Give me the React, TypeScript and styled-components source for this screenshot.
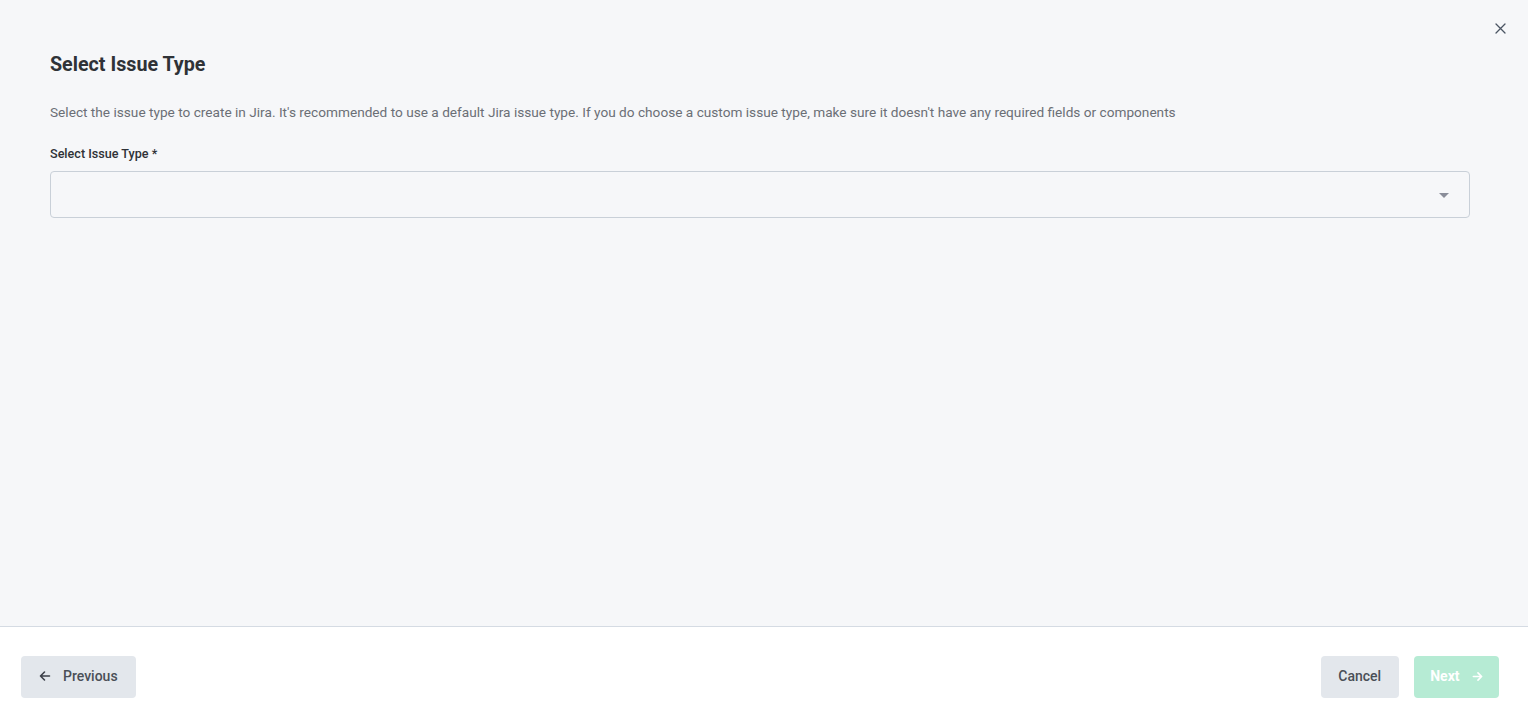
import React from "react";
import styled, { createGlobalStyle } from "styled-components";

const Global = createGlobalStyle`
  html, body { margin: 0; padding: 0; height: 100%; }
  body { font-family: Roboto, "Liberation Sans", Arial, sans-serif; background: #fff; }
  #root { height: 100%; }
  * { box-sizing: border-box; }
`;

const Page = styled.div`
  display: flex;
  flex-direction: column;
  height: 727px;
`;

const Body = styled.main`
  position: relative;
  flex: 1;
  background: #f6f7f9;
  border-bottom: 1px solid #d5dbe3;
  padding: 53px 58px 0 50px;
`;

const CloseButton = styled.button`
  position: absolute;
  top: 21px;
  right: 21px;
  width: 14px;
  height: 14px;
  padding: 0;
  border: 0;
  background: transparent;
  display: flex;
  align-items: center;
  justify-content: center;
  cursor: pointer;
`;

const Title = styled.h1`
  margin: 0;
  font-size: 19.7px;
  line-height: 24px;
  font-weight: 700;
  color: #2f3237;
`;

const Description = styled.p`
  margin: 25px 0 0;
  font-size: 13.65px;
  line-height: 20px;
  color: #6b6f76;
`;

const Label = styled.label`
  display: block;
  margin-top: 24px;
  font-size: 12.6px;
  line-height: 16px;
  font-weight: 500;
  color: #2f3237;
`;

const Select = styled.div`
  margin-top: 9px;
  height: 47px;
  border: 1px solid #c9d0d8;
  border-radius: 4px;
  background: #f6f7f9;
  display: flex;
  align-items: center;
  justify-content: flex-end;
  padding-right: 20px;
`;

const Caret = styled.span`
  width: 0;
  height: 0;
  border-left: 5px solid transparent;
  border-right: 5px solid transparent;
  border-top: 5px solid #8a8d99;
  margin-top: 2px;
`;

const Footer = styled.footer`
  height: 100px;
  background: #fff;
  display: flex;
  align-items: center;
  justify-content: space-between;
  padding: 0 29px 0 21px;
`;

const Group = styled.div`
  display: flex;
  gap: 15px;
`;

const Button = styled.button<{ $variant?: "secondary" | "primary"; $pad?: number }>`
  height: 42px;
  border: 0;
  border-radius: 4px;
  padding: 0 ${(p) => p.$pad ?? 17}px 2px;
  display: flex;
  align-items: center;
  gap: 12px;
  font-family: Roboto, "Liberation Sans", Arial, sans-serif;
  font-size: 14px;
  font-weight: ${(p) => (p.$variant === "primary" ? 700 : 500)};
  background: ${(p) => (p.$variant === "primary" ? "#b6ebd4" : "#e3e7ec")};
  color: ${(p) => (p.$variant === "primary" ? "#ffffff" : "#4a4f57")};
  cursor: pointer;
`;

const ArrowLeft = () => (
  <svg width="12" height="12" viewBox="0 0 12 12" fill="none" stroke="#3c4048" strokeWidth="1.6" strokeLinecap="round" strokeLinejoin="round">
    <path d="M10.5 6H1.5M5.5 2L1.5 6l4 4" />
  </svg>
);

const ArrowRight = () => (
  <svg width="11" height="11" viewBox="0 0 12 12" fill="none" stroke="#ffffff" strokeWidth="1.8" strokeLinecap="round" strokeLinejoin="round">
    <path d="M1.5 6h9M6.5 2l4 4-4 4" />
  </svg>
);

export default function App() {
  return (
    <Page>
      <Global />
      <Body>
        <CloseButton aria-label="Close">
          <svg width="11" height="11" viewBox="0 0 11 11" stroke="#4b5563" strokeWidth="1.3" strokeLinecap="round">
            <path d="M1 1l9 9M10 1l-9 9" />
          </svg>
        </CloseButton>
        <Title>Select Issue Type</Title>
        <Description>
          Select the issue type to create in Jira. It's recommended to use a default Jira issue type. If you do choose a custom issue type, make sure it doesn't have any required fields or components
        </Description>
        <Label>Select Issue Type *</Label>
        <Select>
          <Caret />
        </Select>
      </Body>
      <Footer>
        <Button $variant="secondary" $pad={18}>
          <ArrowLeft />
          Previous
        </Button>
        <Group>
          <Button $variant="secondary" $pad={17.5}>Cancel</Button>
          <Button $variant="primary" $pad={16.5}>
            Next
            <ArrowRight />
          </Button>
        </Group>
      </Footer>
    </Page>
  );
}
